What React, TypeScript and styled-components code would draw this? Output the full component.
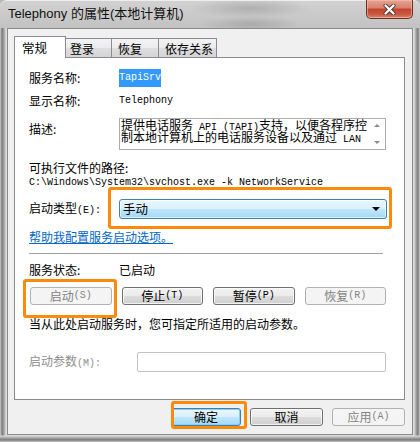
import React from "react";
import styled, { createGlobalStyle, css } from "styled-components";

const GlobalStyle = createGlobalStyle`
  html, body { margin: 0; padding: 0; background: #b8b8b8; }
  * { box-sizing: border-box; }
`;

const CJK = `"Noto Sans CJK SC", "Noto Sans", sans-serif`;
const MONO = `"Liberation Mono", "DejaVu Sans Mono", monospace`;

const Window = styled.div`
  position: relative;
  width: 420px;
  height: 442px;
  display: flex;
  flex-direction: column;
  padding: 0 7px 7px 7px;
  border-radius: 6px 6px 0 0;
  font-family: ${CJK};
  font-size: 12px;
  color: #000;
  background:
    linear-gradient(0deg, #d0d0d0 0px, #7a7a7a 2px, #a2a2a2 4px, #d6d6d6 6px, rgba(214,214,214,0) 7px),
    linear-gradient(90deg, #d0d0d0 0px, #7a7a7a 2px, #a2a2a2 4px, #dcdcdc 6px, #dcdcdc calc(100% - 6px), #a2a2a2 calc(100% - 4px), #7a7a7a calc(100% - 2px), #d0d0d0 100%);
`;

const TitleBar = styled.div`
  height: 28px;
  margin: 0 -7px;
  padding: 0 7px 0 8px;
  display: flex;
  align-items: flex-start;
  border-radius: 6px 6px 0 0;
  background:
    radial-gradient(ellipse 60px 10px at 250px 8px, rgba(120,120,120,0.35), rgba(120,120,120,0)),
    radial-gradient(ellipse 50px 8px at 250px 24px, rgba(110,110,110,0.3), rgba(110,110,110,0)),
    linear-gradient(180deg, #d2d2d2 0%, #c8c8c8 60%, #c2c2c2 100%);
  box-shadow: inset 0 1px 0 #eeeeee;
`;

const Title = styled.div`
  margin-top: 6px;
  font-family: "Liberation Sans", ${CJK};
  font-size: 13px;
  line-height: 16px;
  color: #111;
`;

const CloseButton = styled.div`
  margin-left: auto;
  width: 47px;
  height: 19px;
  border: 1px solid #6b2f27;
  border-top: none;
  border-radius: 0 0 5px 5px;
  display: flex;
  align-items: center;
  justify-content: center;
  background: linear-gradient(180deg, #e6a394 0%, #d7806d 45%, #c4432c 50%, #c85a42 80%, #dc8a70 100%);
  box-shadow: inset 0 0 0 1px rgba(255, 200, 190, 0.5);
`;

const Client = styled.div`
  flex: 1;
  display: flex;
  flex-direction: column;
  background: #f0f0f0;
  border: 1px solid #8a8a8a;
  padding: 7px 7px 0 6px;
`;

const TabStrip = styled.div`
  height: 21px;
  display: flex;
  align-items: flex-end;
  position: relative;
  z-index: 1;
`;

const Tab = styled.div<{ $w: number; $active?: boolean; $pad: number }>`
  width: ${(p) => p.$w}px;
  padding-left: ${(p) => p.$pad}px;
  border: 1px solid #898c95;
  border-bottom: none;
  line-height: 17px;
  ${(p) =>
    p.$active
      ? css`
          height: 22px;
          margin-bottom: -1px;
          background: #ffffff;
          padding-top: 2px;
          font-size: 12.5px;
        `
      : css`
          height: 19px;
          margin-left: -1px;
          background: linear-gradient(180deg, #f3f3f3 0%, #ebebeb 50%, #dedede 50%, #d4d4d4 100%);
          padding-top: 1px;
        `}
`;

const Panel = styled.div`
  height: 343px;
  background: #ffffff;
  border: 1px solid #898c95;
  padding: 0 18px 0 14px;
  display: flex;
  flex-direction: column;
`;

const Row = styled.div<{ $top: number; $h: number; $align?: string }>`
  margin-top: ${(p) => p.$top}px;
  height: ${(p) => p.$h}px;
  line-height: 16px;
  display: flex;
  align-items: ${(p) => p.$align || "center"};
`;

const Label = styled.div<{ $w?: number; $muted?: boolean; $pt?: number }>`
  width: ${(p) => (p.$w ? `${p.$w}px` : "auto")};
  flex: none;
  line-height: 16px;
  padding-top: ${(p) => p.$pt || 0}px;
  color: ${(p) => (p.$muted ? "#8d8d8d" : "#000")};
  white-space: nowrap;
`;

const Mono = styled.span<{ $sel?: boolean }>`
  font-family: ${MONO};
  font-size: 10px;
  line-height: inherit;
  white-space: pre;
  ${(p) =>
    p.$sel &&
    css`
      background: #3399ff;
      color: #fff;
      padding: 1px 0;
    `}
`;

const DescBox = styled.div`
  flex: 1;
  height: 32px;
  border: 1px solid #abadb3;
  display: flex;
`;

const DescText = styled.div`
  flex: 1;
  padding: 0 0 0 1px;
  display: flex;
  flex-direction: column;
  font-size: 12px;
  white-space: nowrap;
`;

const DescLine = styled.div`
  height: 12px;
  line-height: 12px;
`;

const ScrollBar = styled.div`
  width: 16px;
  flex: none;
  display: flex;
  flex-direction: column;
  justify-content: space-between;
  align-items: center;
  padding: 5px 0 5px;
  background: #ffffff;
`;

const Arrow = styled.div<{ $down?: boolean }>`
  width: 0;
  height: 0;
  border-left: 3.5px solid transparent;
  border-right: 3.5px solid transparent;
  ${(p) =>
    p.$down
      ? css`border-top: 3px solid #8a8a8a;`
      : css`border-bottom: 3px solid #8a8a8a;`}
`;

const PathText = styled.div`
  font-family: ${MONO};
  font-size: 10px;
  line-height: 14px;
  white-space: pre;
`;

const Combo = styled.div`
  flex: 1;
  height: 20px;
  margin-right: -1px;
  border: 1px solid #3c7fb1;
  border-radius: 3px;
  display: flex;
  align-items: center;
  padding: 0 6px 0 3px;
  background: linear-gradient(180deg, #eaf6fd 0%, #d9f0fc 50%, #bee6fd 50%, #a7d9f5 100%);
  box-shadow: inset 0 0 0 1px rgba(255, 255, 255, 0.6);
`;

const ComboText = styled.span`
  flex: 1;
  line-height: 16px;
  font-size: 12.5px;
`;

const ComboArrow = styled.div`
  width: 0;
  height: 0;
  border-left: 4px solid transparent;
  border-right: 4px solid transparent;
  border-top: 4px solid #000;
`;

const Link = styled.a`
  color: #0066cc;
  text-decoration: underline;
  line-height: 16px;
  cursor: pointer;
`;

const Separator = styled.div`
  margin-top: 8px;
  margin-right: 3px;
  height: 1px;
  background: #a0a0a0;
`;

const ButtonGrid = styled.div`
  margin-top: 9px;
  height: 18px;
  margin-left: 1px;
  display: grid;
  grid-template-columns: repeat(4, 1fr);
  column-gap: 10px;
`;

const Button = styled.div<{ $disabled?: boolean; $default?: boolean; $w?: number }>`
  height: 18px;
  width: ${(p) => (p.$w ? `${p.$w}px` : "auto")};
  border-radius: 3px;
  display: flex;
  align-items: center;
  justify-content: center;
  line-height: 14px;
  font-size: 12px;
  ${(p) =>
    p.$disabled
      ? css`
          border: 1px solid #adb2b5;
          background: #f4f4f4;
          color: #838383;
        `
      : p.$default
      ? css`
          border: 1px solid #3c7fb1;
          background: linear-gradient(180deg, #eaf6fd 0%, #d9f0fc 50%, #bee6fd 50%, #a7d9f5 100%);
          box-shadow: inset 0 0 0 1px #8ccff0;
          color: #000;
        `
      : css`
          border: 1px solid #707070;
          background: linear-gradient(180deg, #f2f2f2 0%, #ebebeb 50%, #dddddd 50%, #cfcfcf 100%);
          box-shadow: inset 0 0 0 1px rgba(255, 255, 255, 0.7);
          color: #000;
        `}
`;

const Input = styled.div`
  flex: 1;
  height: 20px;
  border: 1px solid #c2c4c8;
  border-radius: 2px;
  background: #fff;
`;

const BottomRow = styled.div`
  margin-top: 8px;
  display: flex;
  justify-content: flex-end;
  gap: 9px;
`;

const Highlight = styled.div<{ $x: number; $y: number; $w: number; $h: number }>`
  position: absolute;
  left: ${(p) => p.$x}px;
  top: ${(p) => p.$y}px;
  width: ${(p) => p.$w}px;
  height: ${(p) => p.$h}px;
  border: 3.5px solid #ff8a0a;
  border-radius: 3px;
  pointer-events: none;
`;

const CloseGlyph = () => (
  <svg width="13" height="11" viewBox="0 0 13 11">
    <path d="M2.5 1.5 L10.5 9.5 M10.5 1.5 L2.5 9.5" stroke="#4a3a38" strokeWidth="4" strokeLinecap="round" />
    <path d="M2.5 1.5 L10.5 9.5 M10.5 1.5 L2.5 9.5" stroke="#ffffff" strokeWidth="2.3" strokeLinecap="round" />
  </svg>
);

export default function App() {
  return (
    <>
      <GlobalStyle />
      <Window>
        <TitleBar>
          <Title>Telephony 的属性(本地计算机)</Title>
          <CloseButton>
            <CloseGlyph />
          </CloseButton>
        </TitleBar>
        <Client>
          <TabStrip>
            <Tab $w={52} $pad={7} $active>常规</Tab>
            <Tab $w={47} $pad={4}>登录</Tab>
            <Tab $w={48} $pad={6}>恢复</Tab>
            <Tab $w={59} $pad={6}>依存关系</Tab>
          </TabStrip>
          <Panel>
            <Row $top={12} $h={16}>
              <Label $w={90}>服务名称:</Label>
              <Mono $sel>TapiSrv</Mono>
            </Row>
            <Row $top={7} $h={16}>
              <Label $w={90}>显示名称:</Label>
              <Mono>Telephony</Mono>
            </Row>
            <Row $top={9} $h={32} $align="flex-start">
              <Label $w={90} $pt={3}>描述:</Label>
              <DescBox>
                <DescText>
                  <DescLine>
                    提供电话服务<Mono> API (TAPI)</Mono>支持，以便各程序控
                  </DescLine>
                  <DescLine>
                    制本地计算机上的电话服务设备以及通过<Mono> LAN</Mono>
                  </DescLine>
                </DescText>
                <ScrollBar>
                  <Arrow />
                  <Arrow $down />
                </ScrollBar>
              </DescBox>
            </Row>
            <Row $top={10} $h={16}>
              <Label>可执行文件的路径:</Label>
            </Row>
            <Row $top={0} $h={14}>
              <PathText>C:\Windows\System32\svchost.exe -k NetworkService</PathText>
            </Row>
            <Row $top={9} $h={20}>
              <Label $w={90}>
                启动类型<Mono>(E):</Mono>
              </Label>
              <Combo>
                <ComboText>手动</ComboText>
                <ComboArrow />
              </Combo>
            </Row>
            <Row $top={10} $h={16}>
              <Link>帮助我配置服务启动选项。</Link>
            </Row>
            <Separator />
            <Row $top={8} $h={16}>
              <Label $w={90}>服务状态:</Label>
              <Label>已启动</Label>
            </Row>
            <ButtonGrid>
              <Button $disabled>
                启动<Mono>(S)</Mono>
              </Button>
              <Button>
                停止<Mono>(T)</Mono>
              </Button>
              <Button>
                暂停<Mono>(P)</Mono>
              </Button>
              <Button $disabled>
                恢复<Mono>(R)</Mono>
              </Button>
            </ButtonGrid>
            <Row $top={11} $h={16}>
              <Label>当从此处启动服务时，您可指定所适用的启动参数。</Label>
            </Row>
            <Row $top={20} $h={20}>
              <Label $w={108} $muted>
                启动参数<Mono>(M):</Mono>
              </Label>
              <Input />
            </Row>
          </Panel>
          <BottomRow>
            <Button $default $w={70}>确定</Button>
            <Button $w={73}>取消</Button>
            <Button $disabled $w={73}>
              应用<Mono>(A)</Mono>
            </Button>
          </BottomRow>
        </Client>
        <Highlight $x={108} $y={187} $w={284} $h={42} />
        <Highlight $x={23} $y={279} $w={94} $h={39} />
        <Highlight $x={171} $y={401} $w={76} $h={28} />
      </Window>
    </>
  );
}
